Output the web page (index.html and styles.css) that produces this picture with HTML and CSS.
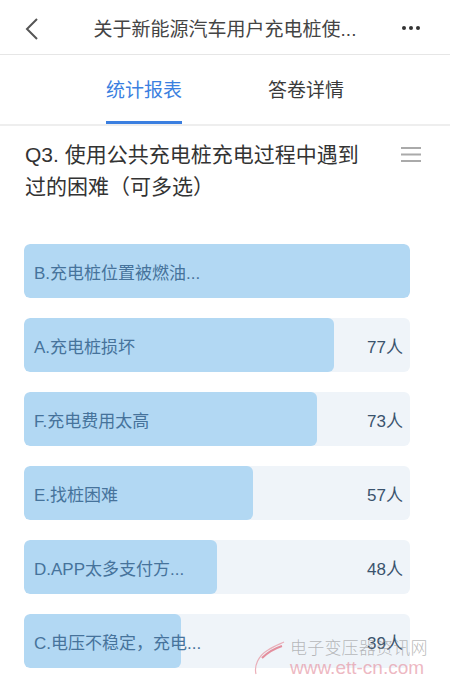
FILE: index.html
```html
<!DOCTYPE html>
<html lang="zh-CN">
<head>
    <meta charset="UTF-8">
    <meta name="viewport" content="width=device-width, initial-scale=1.0">
    <title>统计报表</title>
    <link rel="stylesheet" href="styles.css">
</head>
<body>
<div class="page">
    <div class="header">
        <div class="back">
            <svg width="14" height="22" viewBox="0 0 14 22">
                <path d="M12 1 L2 11 L12 21" fill="none" stroke="#555" stroke-width="2"/>
            </svg>
        </div>
        <div class="title">关于新能源汽车用户充电桩使...</div>
        <div class="more">
            <span class="dot"></span><span class="dot"></span><span class="dot"></span>
        </div>
    </div>

    <div class="tabs">
        <div class="tab active">统计报表</div>
        <div class="tab">答卷详情</div>
    </div>

    <div class="question">
        <div class="q-title">Q3. 使用公共充电桩充电过程中遇到过的困难（可多选）</div>
        <svg class="q-menu" width="20" height="16" viewBox="0 0 20 16">
            <rect x="0" y="1" width="20" height="2" fill="#aaa"/>
            <rect x="0" y="7.5" width="20" height="2" fill="#aaa"/>
            <rect x="0" y="14" width="20" height="2" fill="#aaa"/>
        </svg>
    </div>

    <div class="bars">
        <div class="bar">
            <div class="fill" style="width: 100%"></div>
            <div class="bar-row">
                <span class="label">B.充电桩位置被燃油...</span>
            </div>
        </div>
        <div class="bar">
            <div class="fill" style="width: 80.2%"></div>
            <div class="bar-row">
                <span class="label">A.充电桩损坏</span>
                <span class="count">77人</span>
            </div>
        </div>
        <div class="bar">
            <div class="fill" style="width: 76%"></div>
            <div class="bar-row">
                <span class="label">F.充电费用太高</span>
                <span class="count">73人</span>
            </div>
        </div>
        <div class="bar">
            <div class="fill" style="width: 59.4%"></div>
            <div class="bar-row">
                <span class="label">E.找桩困难</span>
                <span class="count">57人</span>
            </div>
        </div>
        <div class="bar">
            <div class="fill" style="width: 50%"></div>
            <div class="bar-row">
                <span class="label">D.APP太多支付方...</span>
                <span class="count">48人</span>
            </div>
        </div>
        <div class="bar">
            <div class="fill" style="width: 40.6%"></div>
            <div class="bar-row">
                <span class="label">C.电压不稳定，充电...</span>
                <span class="count">39人</span>
            </div>
        </div>
    </div>

    <div class="watermark">
        <svg class="wm-logo" width="34" height="40" viewBox="0 0 34 40">
            <path d="M4 38 C2 30 6 20 16 14 C22 10 28 8 32 6" fill="none" stroke="#e9a3ae" stroke-width="1.2"/>
            <path d="M10 22 C16 16 24 12 30 10" fill="none" stroke="#e27d8e" stroke-width="2"/>
        </svg>
        <div class="wm-text">
            <div class="wm-name">电子变压器资讯网</div>
            <div class="wm-url">www.ett-cn.com</div>
        </div>
    </div>
</div>
</body>
</html>
```

FILE: styles.css
```css
body {
    margin: 0;
    padding: 0;
    background-color: #fff;
    font-family: "Liberation Sans", "Noto Sans CJK SC", sans-serif;
    color: #333;
}

.page {
    position: relative;
    width: 450px;
    height: 696px;
    overflow: hidden;
}

.header {
    height: 54px;
    display: grid;
    grid-template-columns: 70px 1fr 70px;
    align-items: center;
    border-bottom: 1px solid #e6e6e6;
}

.back {
    display: flex;
    padding-left: 25px;
    padding-top: 4px;
}

.title {
    text-align: center;
    font-size: 19px;
    color: #444;
    white-space: nowrap;
}

.more {
    display: flex;
    gap: 3px;
    justify-content: flex-end;
    padding-right: 30px;
    padding-top: 2px;
}

.dot {
    width: 4px;
    height: 4px;
    border-radius: 50%;
    background-color: #333;
}

.tabs {
    height: 69px;
    display: flex;
    justify-content: center;
    gap: 86px;
    border-bottom: 2px solid #eeeeee;
}

.tab {
    box-sizing: border-box;
    height: 69px;
    padding-top: 22px;
    line-height: 28px;
    font-size: 19px;
    color: #3a3a3a;
    border-bottom: 3px solid transparent;
}

.tab.active {
    color: #3b7fe0;
    border-bottom-color: #3b7fe0;
}

.question {
    display: flex;
    gap: 30px;
    padding: 13px 29px 0 25px;
}

.q-title {
    flex: 1;
    font-size: 21px;
    line-height: 32px;
    color: #333;
}

.q-menu {
    margin-top: 7px;
    flex-shrink: 0;
}

.bars {
    display: flex;
    flex-direction: column;
    gap: 20px;
    margin-top: 41px;
    padding: 0 40px 0 24px;
}

.bar {
    position: relative;
    height: 54px;
    border-radius: 6px;
    background-color: #eff4f9;
    overflow: hidden;
}

.fill {
    position: absolute;
    left: 0;
    top: 0;
    bottom: 0;
    border-radius: 6px;
    background-color: #b2d8f3;
}

.bar-row {
    position: relative;
    height: 100%;
    display: flex;
    justify-content: space-between;
    align-items: center;
    padding: 0 7px 0 10px;
    font-size: 17px;
}

.label {
    color: #46739b;
}

.count {
    color: #3a536d;
}

.watermark {
    position: absolute;
    left: 252px;
    top: 636px;
    display: flex;
    align-items: flex-start;
    gap: 4px;
    opacity: 0.85;
}

.wm-text {
    display: flex;
    flex-direction: column;
}

.wm-name {
    font-size: 17px;
    line-height: 22px;
    letter-spacing: 0.2px;
    color: rgba(140, 140, 140, 0.7);
    font-family: "Noto Sans CJK SC", sans-serif;
    font-weight: 300;
}

.wm-url {
    font-size: 19px;
    line-height: 20px;
    color: rgba(230, 150, 165, 0.8);
}
```
